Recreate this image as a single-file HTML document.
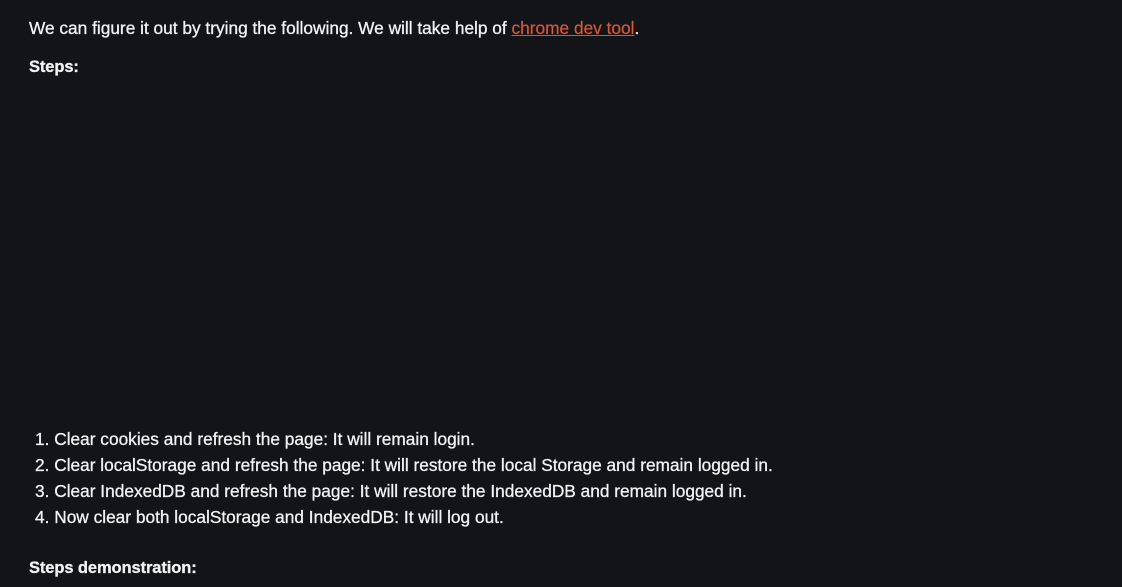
<!DOCTYPE html>
<html><head><style>
html,body{margin:0;padding:0;background:#131418;width:1122px;height:587px;overflow:hidden}
body{font-family:"Liberation Sans",sans-serif;color:#f2f2f2;font-size:17.3px;letter-spacing:0}
.l{position:absolute;white-space:nowrap;line-height:20px;-webkit-text-stroke:0.3px #f2f2f2}
a{color:#e0552f;text-decoration:underline;-webkit-text-stroke:0.2px #e0552f}
b{font-weight:bold;font-size:16.5px;letter-spacing:-0.1px}
</style></head><body>
<div class="l" style="left:29px;top:18px">We can figure it out by trying the following. We will take help of <a>chrome dev tool</a>.</div>
<div class="l" style="left:29px;top:56px"><b>Steps:</b></div>
<div class="l" style="left:35px;top:429px">1. Clear cookies and refresh the page: It will remain login.</div>
<div class="l" style="left:35px;top:455px">2. Clear localStorage and refresh the page: It will restore the local Storage and remain logged in.</div>
<div class="l" style="left:35px;top:481px">3. Clear IndexedDB and refresh the page: It will restore the IndexedDB and remain logged in.</div>
<div class="l" style="left:35px;top:507px">4. Now clear both localStorage and IndexedDB: It will log out.</div>
<div class="l" style="left:29px;top:557px"><b>Steps demonstration:</b></div>
</body></html>
